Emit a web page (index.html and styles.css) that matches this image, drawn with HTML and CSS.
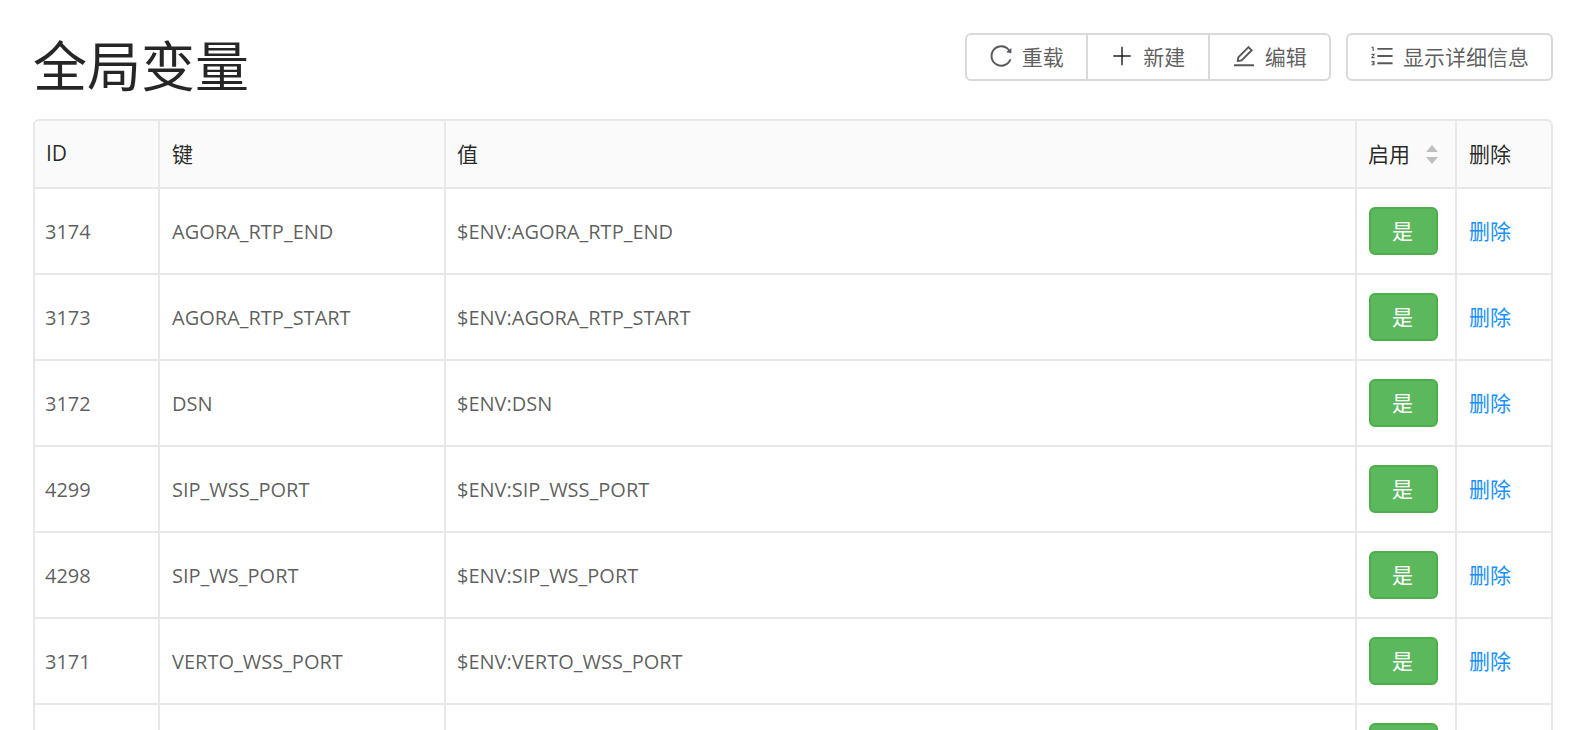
FILE: index.html
```html
<!DOCTYPE html>
<html lang="zh-CN">
<head>
    <meta charset="UTF-8">
    <meta name="viewport" content="width=device-width, initial-scale=1.0">
    <title>全局变量</title>
    <link rel="stylesheet" href="styles.css">
</head>
<body>
    <div class="page-head">
        <h1 class="titulo">全局变量</h1>
        <div class="acoes">
            <div class="btn-group">
                <button class="btn" type="button">
                    <svg class="icon" viewBox="0 0 1024 1024"><path d="M909.1 209.3l-56.4 44.1C775.8 155.1 656.2 92 521.9 92 290 92 102.3 279.5 102 511.5 101.7 743.7 289.8 932 521.9 932c181.3 0 335.8-115 394.6-276.1 1.5-4.2-.7-8.9-4.9-10.3l-56.7-19.5a8 8 0 0 0-10.1 4.8c-1.8 5-3.8 10-5.9 14.9-17.3 41-42.1 77.8-73.7 109.4A344.77 344.77 0 0 1 655.9 829c-42.3 17.9-87.4 27-133.8 27-46.5 0-91.5-9.1-133.8-27A341.5 341.5 0 0 1 279 755.2a342.16 342.16 0 0 1-73.7-109.4c-17.9-42.4-27-87.4-27-133.9s9.1-91.5 27-133.9c17.3-41 42.1-77.8 73.7-109.4 31.6-31.6 68.4-56.4 109.3-73.8 42.3-17.9 87.4-27 133.8-27 46.5 0 91.5 9.1 133.8 27a341.5 341.5 0 0 1 109.3 73.8c9.9 9.9 19.2 20.4 27.8 31.4l-60.2 47a8 8 0 0 0 3 14.1l175.6 43c5 1.2 9.9-2.6 9.9-7.7l.8-180.9c-.1-6.6-7.8-10.3-13-6.2z"/></svg>
                    <span>重载</span>
                </button>
                <button class="btn" type="button">
                    <svg class="icon" viewBox="0 0 1024 1024"><path d="M482 152h60q8 0 8 8v704q0 8-8 8h-60q-8 0-8-8V160q0-8 8-8z"/><path d="M176 474h672q8 0 8 8v60q0 8-8 8H176q-8 0-8-8v-60q0-8 8-8z"/></svg>
                    <span>新建</span>
                </button>
                <button class="btn" type="button">
                    <svg class="icon" viewBox="0 0 1024 1024"><path d="M257.7 752c2 0 4-.2 6-.5L431.9 722c2-.4 3.9-1.3 5.3-2.8l423.9-423.9a9.96 9.96 0 0 0 0-14.1L694.9 114.9c-1.9-1.9-4.4-2.9-7.1-2.9s-5.2 1-7.1 2.9L256.8 538.8c-1.5 1.5-2.4 3.3-2.8 5.3l-29.5 168.2a33.5 33.5 0 0 0 9.4 29.8c6.6 6.4 14.9 9.9 23.8 9.9zm67.4-174.4L687.8 215l73.3 73.3-362.7 362.6-88.9 15.7 15.6-89zM880 836H144c-17.7 0-32 14.3-32 32v36c0 4.4 3.6 8 8 8h784c4.4 0 8-3.6 8-8v-36c0-17.7-14.3-32-32-32z"/></svg>
                    <span>编辑</span>
                </button>
            </div>
            <button class="btn btn-solo" type="button">
                <svg class="icon" viewBox="0 0 1024 1024"><path d="M920 760H336c-4.4 0-8 3.6-8 8v56c0 4.4 3.6 8 8 8h584c4.4 0 8-3.6 8-8v-56c0-4.4-3.6-8-8-8zm0-568H336c-4.4 0-8 3.6-8 8v56c0 4.4 3.6 8 8 8h584c4.4 0 8-3.6 8-8v-56c0-4.4-3.6-8-8-8zm0 284H336c-4.4 0-8 3.6-8 8v56c0 4.4 3.6 8 8 8h584c4.4 0 8-3.6 8-8v-56c0-4.4-3.6-8-8-8zM216 712H100c-2.2 0-4 1.8-4 4v34c0 2.2 1.8 4 4 4h72.4v20.5h-35.7c-2.2 0-4 1.8-4 4v34c0 2.2 1.8 4 4 4h35.7V838H100c-2.2 0-4 1.8-4 4v34c0 2.2 1.8 4 4 4h116c2.2 0 4-1.8 4-4V716c0-2.2-1.8-4-4-4zM100 188h38v120c0 2.2 1.8 4 4 4h40c2.2 0 4-1.8 4-4V152c0-4.4-3.6-8-8-8h-78c-2.2 0-4 1.8-4 4v36c0 2.2 1.8 4 4 4zm116 240H100c-2.2 0-4 1.8-4 4v36c0 2.2 1.8 4 4 4h68.4l-70.3 77.7a8.3 8.3 0 0 0-2.1 5.4V592c0 2.2 1.8 4 4 4h116c2.2 0 4-1.8 4-4v-36c0-2.2-1.8-4-4-4h-68.4l70.3-77.7a8.3 8.3 0 0 0 2.1-5.4V432c0-2.2-1.8-4-4-4z"/></svg>
                <span>显示详细信息</span>
            </button>
        </div>
    </div>

    <table class="tabela">
        <colgroup>
            <col class="col-id">
            <col class="col-chave">
            <col>
            <col class="col-ativo">
            <col class="col-excluir">
        </colgroup>
        <thead>
            <tr>
                <th>ID</th>
                <th>键</th>
                <th class="cel-valor">值</th>
                <th class="cel-ativo">
                    <div class="th-sort">
                        <span>启用</span>
                        <span class="sort-setas"><i class="seta-cima"></i><i class="seta-baixo"></i></span>
                    </div>
                </th>
                <th>删除</th>
            </tr>
        </thead>
        <tbody>
            <tr>
                <td>3174</td><td>AGORA_RTP_END</td><td class="cel-valor">$ENV:AGORA_RTP_END</td>
                <td><button class="btn-sim" type="button">是</button></td><td><a class="link" href="#">删除</a></td>
            </tr>
            <tr>
                <td>3173</td><td>AGORA_RTP_START</td><td class="cel-valor">$ENV:AGORA_RTP_START</td>
                <td><button class="btn-sim" type="button">是</button></td><td><a class="link" href="#">删除</a></td>
            </tr>
            <tr>
                <td>3172</td><td>DSN</td><td class="cel-valor">$ENV:DSN</td>
                <td><button class="btn-sim" type="button">是</button></td><td><a class="link" href="#">删除</a></td>
            </tr>
            <tr>
                <td>4299</td><td>SIP_WSS_PORT</td><td class="cel-valor">$ENV:SIP_WSS_PORT</td>
                <td><button class="btn-sim" type="button">是</button></td><td><a class="link" href="#">删除</a></td>
            </tr>
            <tr>
                <td>4298</td><td>SIP_WS_PORT</td><td class="cel-valor">$ENV:SIP_WS_PORT</td>
                <td><button class="btn-sim" type="button">是</button></td><td><a class="link" href="#">删除</a></td>
            </tr>
            <tr>
                <td>3171</td><td>VERTO_WSS_PORT</td><td class="cel-valor">$ENV:VERTO_WSS_PORT</td>
                <td><button class="btn-sim" type="button">是</button></td><td><a class="link" href="#">删除</a></td>
            </tr>
            <tr>
                <td></td><td></td><td></td>
                <td><button class="btn-sim" type="button">是</button></td><td><a class="link" href="#">删除</a></td>
            </tr>
        </tbody>
    </table>
</body>
</html>
```

FILE: styles.css
```css
* {
    margin: 0;
    padding: 0;
    box-sizing: border-box;
}

html, body {
    height: 730px;
    overflow: hidden;
}

body {
    background: #fff;
    color: rgba(0,0,0,0.65);
    font-family: "Open Sans", "Noto Sans CJK SC", sans-serif;
    font-size: 20px;
    padding: 33px 27px 0 33px;
}

.page-head {
    display: flex;
    justify-content: space-between;
    align-items: flex-start;
    height: 86px;
}

.titulo {
    color: rgba(0,0,0,0.85);
    font-size: 54px;
    font-weight: 400;
    line-height: 66px;
}

.acoes {
    display: flex;
    gap: 15px;
}

.btn-group {
    display: flex;
}

.btn {
    display: flex;
    align-items: center;
    justify-content: center;
    gap: 8px;
    height: 48px;
    width: 123.5px;
    padding-bottom: 2px;
    background: #fff;
    border: 2px solid #d9d9d9;
    margin-left: -2px;
    color: rgba(0,0,0,0.65);
    font-family: inherit;
    font-size: 21px;
    cursor: pointer;
}

.btn-group .btn:first-child {
    margin-left: 0;
    border-radius: 6px 0 0 6px;
}

.btn-group .btn:last-child {
    border-radius: 0 6px 6px 0;
}

.btn-solo {
    width: 207px;
    margin-left: 0;
    border-radius: 6px;
}

.icon {
    width: 26px;
    height: 26px;
    margin-left: -1px;
    fill: currentColor;
}

.tabela {
    width: 100%;
    table-layout: fixed;
    border-collapse: separate;
    border-spacing: 0;
    border-top: 2px solid #e8e8e8;
    border-left: 2px solid #e8e8e8;
    border-radius: 6px 6px 0 0;
}

.col-id { width: 125px; }
.col-chave { width: 286px; }
.col-ativo { width: 100px; }
.col-excluir { width: 96px; }

.tabela th, .tabela td {
    border-right: 2px solid #e8e8e8;
    border-bottom: 2px solid #e8e8e8;
    padding: 0 12px;
    text-align: left;
    font-weight: 400;
}

.tabela th {
    height: 68px;
    padding-bottom: 2px;
    background: #fafafa;
    color: rgba(0,0,0,0.85);
    font-size: 21px;
}

.tabela th:first-child {
    padding-left: 11px;
    border-top-left-radius: 6px;
}

.tabela th:last-child { border-top-right-radius: 6px; }

.tabela td {
    height: 86px;
}

.tabela td:first-child { padding-left: 10px; }

.tabela .cel-valor { padding-left: 11px; }
.tabela .cel-ativo { padding-left: 11px; }

.th-sort {
    display: flex;
    align-items: center;
    justify-content: space-between;
}

.sort-setas {
    display: flex;
    flex-direction: column;
    gap: 5px;
    margin: 2px 5px 0 0;
}

.seta-cima, .seta-baixo {
    display: block;
    border-left: 6px solid transparent;
    border-right: 6px solid transparent;
}

.seta-cima { border-bottom: 7px solid #bfbfbf; }
.seta-baixo { border-top: 7px solid #bfbfbf; }

.btn-sim {
    display: block;
    width: 69px;
    height: 48px;
    padding: 0 2px 2px 0;
    background: #5cb85c;
    border: 2px solid #4cae4c;
    border-radius: 6px;
    color: #fff;
    font-family: inherit;
    font-size: 21px;
    cursor: pointer;
}

.link {
    display: inline-block;
    margin-bottom: 2px;
    color: #1890ff;
    font-size: 21px;
    text-decoration: none;
}
```
